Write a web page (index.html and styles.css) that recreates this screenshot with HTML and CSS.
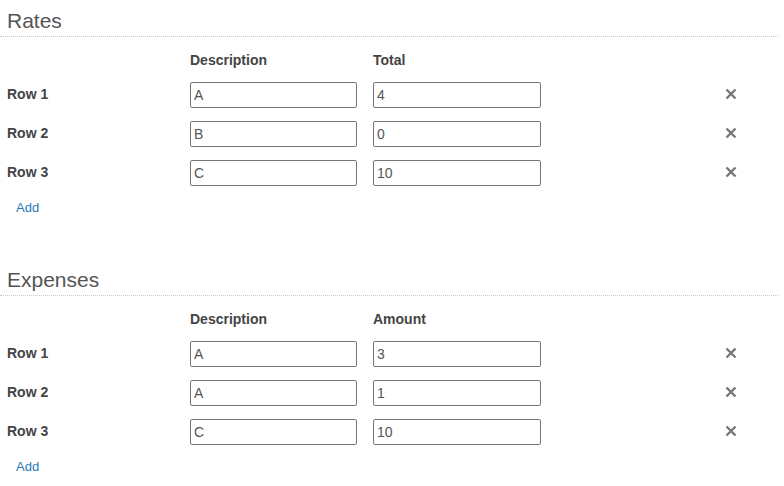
FILE: index.html
```html
<!DOCTYPE html>
<html>
<head>
<meta charset="utf-8">
<link rel="stylesheet" href="styles.css">
</head>
<body>
<div class="page">
  <section class="block">
    <h2 class="block-title">Rates</h2>
    <div class="head-row">
      <span class="label-col"></span>
      <span class="col-head">Description</span>
      <span class="col-head col-second">Total</span>
    </div>
    <div class="row">
      <span class="label-col">Row 1</span>
      <input class="field" type="text" value="A">
      <input class="field col-second" type="text" value="4">
      <span class="remove"><svg viewBox="0 0 12 12" width="12" height="12"><path d="M1.5 1.5L10.5 10.5M10.5 1.5L1.5 10.5" stroke="#777" stroke-width="2.4" fill="none"/></svg></span>
    </div>
    <div class="row">
      <span class="label-col">Row 2</span>
      <input class="field" type="text" value="B">
      <input class="field col-second" type="text" value="0">
      <span class="remove"><svg viewBox="0 0 12 12" width="12" height="12"><path d="M1.5 1.5L10.5 10.5M10.5 1.5L1.5 10.5" stroke="#777" stroke-width="2.4" fill="none"/></svg></span>
    </div>
    <div class="row">
      <span class="label-col">Row 3</span>
      <input class="field" type="text" value="C">
      <input class="field col-second" type="text" value="10">
      <span class="remove"><svg viewBox="0 0 12 12" width="12" height="12"><path d="M1.5 1.5L10.5 10.5M10.5 1.5L1.5 10.5" stroke="#777" stroke-width="2.4" fill="none"/></svg></span>
    </div>
    <a class="add" href="#">Add</a>
  </section>

  <section class="block block-next">
    <h2 class="block-title">Expenses</h2>
    <div class="head-row">
      <span class="label-col"></span>
      <span class="col-head">Description</span>
      <span class="col-head col-second">Amount</span>
    </div>
    <div class="row">
      <span class="label-col">Row 1</span>
      <input class="field" type="text" value="A">
      <input class="field col-second" type="text" value="3">
      <span class="remove"><svg viewBox="0 0 12 12" width="12" height="12"><path d="M1.5 1.5L10.5 10.5M10.5 1.5L1.5 10.5" stroke="#777" stroke-width="2.4" fill="none"/></svg></span>
    </div>
    <div class="row">
      <span class="label-col">Row 2</span>
      <input class="field" type="text" value="A">
      <input class="field col-second" type="text" value="1">
      <span class="remove"><svg viewBox="0 0 12 12" width="12" height="12"><path d="M1.5 1.5L10.5 10.5M10.5 1.5L1.5 10.5" stroke="#777" stroke-width="2.4" fill="none"/></svg></span>
    </div>
    <div class="row">
      <span class="label-col">Row 3</span>
      <input class="field" type="text" value="C">
      <input class="field col-second" type="text" value="10">
      <span class="remove"><svg viewBox="0 0 12 12" width="12" height="12"><path d="M1.5 1.5L10.5 10.5M10.5 1.5L1.5 10.5" stroke="#777" stroke-width="2.4" fill="none"/></svg></span>
    </div>
    <a class="add" href="#">Add</a>
  </section>
</div>
</body>
</html>
```

FILE: styles.css
```css
html, body {
  margin: 0;
  padding: 0;
  background: #fff;
}

body {
  font-family: "Liberation Sans", Arial, sans-serif;
  color: #333;
}

.page {
  width: 778px;
}

.block {
  display: flex;
  flex-direction: column;
  align-items: flex-start;
  padding-top: 9px;
}

.block-next {
  padding-top: 50px;
}

.block-title {
  align-self: stretch;
  margin: 0;
  padding: 0 0 4px 7px;
  font-size: 21px;
  line-height: 23px;
  font-weight: normal;
  color: #555;
  border-bottom: 1px dotted #c8c8c8;
}

.head-row {
  display: flex;
  align-items: center;
  margin-top: 13px;
  padding-left: 7px;
  height: 20px;
  font-size: 14px;
  font-weight: bold;
  color: #444;
}

.label-col {
  width: 183px;
  font-size: 14px;
  font-weight: bold;
  color: #444;
  margin-top: -3px;
}

.head-row .label-col {
  margin-top: 0;
}

.col-head {
  width: 167px;
}

.head-row .col-second {
  margin-left: 16px;
}

.row {
  display: flex;
  align-items: center;
  padding-left: 7px;
  height: 26px;
  margin-top: 13px;
}

.head-row + .row {
  margin-top: 12px;
}

.field {
  box-sizing: border-box;
  width: 167px;
  height: 26px;
  margin: 0;
  padding: 0 3px;
  border: 1px solid #767676;
  border-radius: 2px;
  font-family: "Liberation Sans", Arial, sans-serif;
  font-size: 14px;
  color: #555;
  background: #fff;
  outline: none;
}

.field.col-second {
  margin-left: 16px;
  width: 168px;
}

.remove {
  display: flex;
  margin-left: 184px;
  margin-top: -2px;
  width: 12px;
  height: 12px;
}

.add {
  display: block;
  margin: 12px 0 0 16px;
  font-size: 13px;
  line-height: 20px;
  color: #2a7ab8;
  text-decoration: none;
}
```
